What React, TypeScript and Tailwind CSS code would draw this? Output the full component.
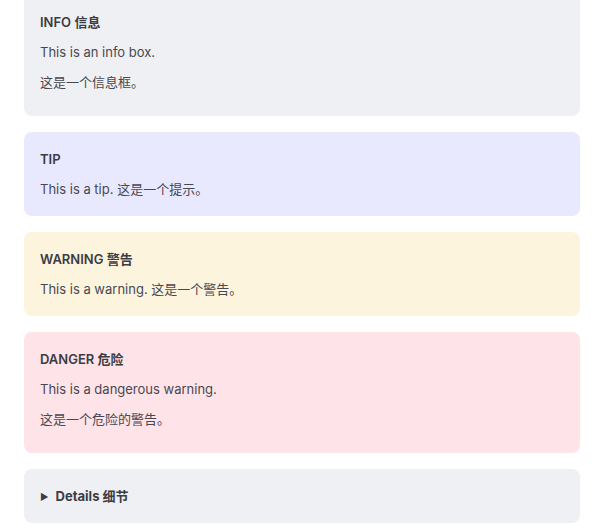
type Block = {
  title: string;
  lines: string[];
  bg: string;
};

const blocks: Block[] = [
  { title: "INFO 信息", lines: ["This is an info box.", "这是一个信息框。"], bg: "bg-[#eff0f3]" },
  { title: "TIP", lines: ["This is a tip. 这是一个提示。"], bg: "bg-[#e8e9ff]" },
  { title: "WARNING 警告", lines: ["This is a warning. 这是一个警告。"], bg: "bg-[#fcf4dc]" },
  { title: "DANGER 危险", lines: ["This is a dangerous warning.", "这是一个危险的警告。"], bg: "bg-[#fee3e8]" },
];

const CustomBlock = ({ block }: { block: Block }) => {
  const multi = block.lines.length > 1;
  return (
    <div className={`${block.bg} rounded-lg px-4 pt-4 ${multi ? "pb-[23px]" : "pb-4"}`}>
      <p className="font-semibold leading-[22px] text-[#3c3c43]">{block.title}</p>
      {block.lines.map((line) => (
        <p key={line} className="mt-2 leading-[22px] text-[#484852]">
          {line}
        </p>
      ))}
    </div>
  );
};

export default function App() {
  return (
    <div
      className="w-[615px] h-[531px] overflow-hidden bg-white text-[13px]"
      style={{ fontFamily: "Inter, 'Noto Sans CJK SC', sans-serif" }}
    >
      <div className="flex flex-col gap-4 px-6 -mt-[5px] w-[604px]">
        {blocks.map((b) => (
          <CustomBlock key={b.title} block={b} />
        ))}
        <div className="bg-[#eff0f3] rounded-lg px-4 py-4">
          <div className="flex items-center gap-[7px] leading-[22px] font-bold text-[#3c3c43]">
            <span className="text-[9px] leading-none">▶</span>
            <span>Details 细节</span>
          </div>
        </div>
      </div>
    </div>
  );
}
